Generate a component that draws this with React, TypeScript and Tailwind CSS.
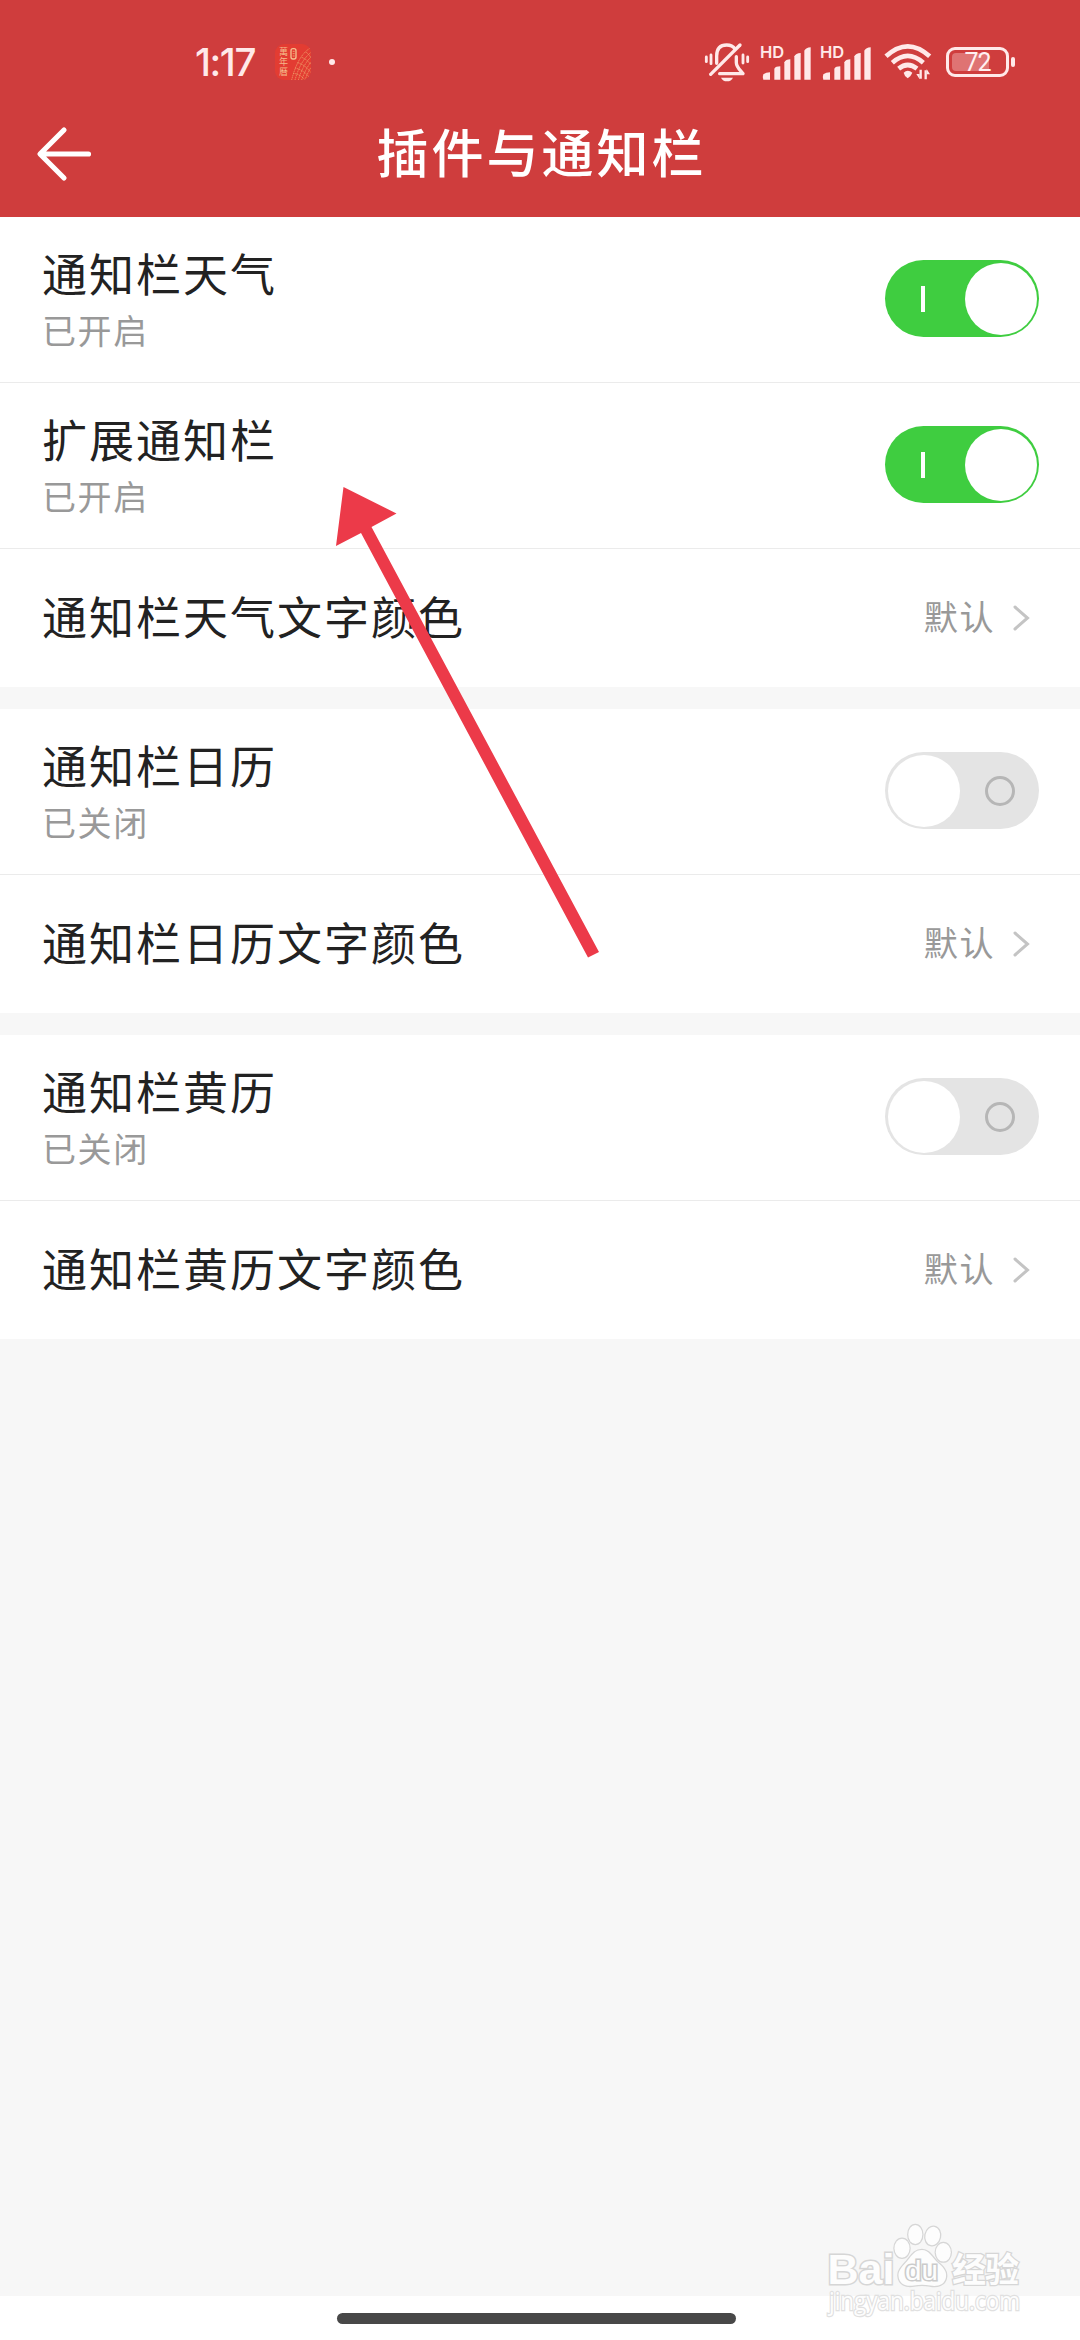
import React from "react";

const INK = "#ffe9e9";

function Signal() {
  return (
    <div className="relative h-[40px] w-[51px]">
      <span className="absolute left-[-1px] top-0 font-['Inter'] text-[16.5px] font-semibold leading-[20px] text-[#ffe9e9]">
        HD
      </span>
      <svg viewBox="0 0 153 120" className="h-[40px] w-[51px]" fill={INK}>
        <path d="M7 97q-3 8 0 16h20V91q-12 0-20 6z" />
        <path d="M40 80q4-7 18-7v40H40z" />
        <path d="M70 61q4-9 18-9v61H70z" />
        <path d="M100 43q4-9 19-10v80h-19z" />
        <path d="M130 26q5-9 19-10v97h-19z" />
      </svg>
    </div>
  );
}

function BellOff() {
  return (
    <svg viewBox="45 38 138 120" className="h-[40px] w-[46px]" fill="none" stroke={INK} strokeWidth="10" strokeLinecap="round">
      <path d="M83 102V80C83 57 95 47 113 47c12 0 20 4 25 12" />
      <path d="M65 135L153 47" />
      <path d="M142 82v18c0 12 9 20 20 33H92" strokeLinejoin="round" />
      <path d="M52 83v14M66 77v26M162 77v24M176 83v14" strokeWidth="8.500" />
      <path d="M96 145h36q-5 11-18 11t-18-11z" fill={INK} stroke="none" />
    </svg>
  );
}

function Wifi() {
  return (
    <svg viewBox="42 42 144 114" className="h-[38px] w-[48px]" fill="none" stroke={INK} strokeWidth="14">
      <path d="M48 82Q113 22 179 82" />
      <path d="M67 101Q113 60 160 101" />
      <path d="M86 119Q113 97 141 119" />
      <path d="M101 131Q113 120 127 131Q124 140 113 148Q103 141 101 131z" fill={INK} stroke="none" />
      <path d="M152 122v27M167 151v-27" strokeWidth="7" />
      <path d="M139 135h10v16zM180 136h-10v-16z" fill={INK} stroke="none" />
    </svg>
  );
}

function Battery() {
  return (
    <div className="flex items-center">
      <div className="relative h-[30px] w-[63px] rounded-[9px] border-[3px] border-[#ffe9e9] p-[3px]">
        <div className="h-full w-[37px] rounded-l-[4px] bg-[#df7373]" />
        <span className="absolute inset-0 flex items-center justify-center font-['Roboto'] text-[25px] leading-none tracking-[-1px] text-[#fff0f0]">
          72
        </span>
      </div>
      <div className="ml-[2px] h-[10px] w-[4px] rounded-[2px] bg-[#ffe9e9]" />
    </div>
  );
}

function AppBadge() {
  return (
    <div className="relative size-[36px] overflow-hidden rounded-[9px] bg-[#e33c32]">
      <div className="absolute left-[4px] top-[3px] flex flex-col font-['Noto_Sans_CJK_SC'] text-[9px] leading-[10px] text-[#f5b98a]">
        <span>萬</span>
        <span>年</span>
        <span>曆</span>
      </div>
      <svg viewBox="0 0 108 108" className="absolute inset-0 size-[36px]" fill="none" stroke="#efa06c">
        <rect x="48" y="14" width="15" height="31" rx="6" strokeWidth="4" stroke="#f5c08f" />
        <path d="M53 22h6M53 29h6M53 36h6" strokeWidth="3" />
        <path
          d="M50 108Q68 35 106 12M60 108Q76 50 108 25M70 108Q84 62 108 39M80 108Q92 74 108 54M90 108Q98 86 108 70M54 88Q76 90 90 108M60 72Q88 78 106 104M68 56Q90 62 108 86M80 40Q96 46 108 62M92 24Q102 30 108 42"
          strokeWidth="2.5"
          strokeDasharray="4 2"
        />
      </svg>
    </div>
  );
}

function Toggle({ on }: { on: boolean }) {
  return on ? (
    <div className="flex h-[77px] w-[154px] items-center justify-between rounded-full bg-[#3fcd40] pl-[36px] pr-[2.5px]">
      <div className="h-[26px] w-[4px] bg-white" />
      <div className="size-[72px] rounded-full bg-white" />
    </div>
  ) : (
    <div className="flex h-[77px] w-[154px] items-center justify-between rounded-full bg-[#e4e4e4] pl-[2.5px] pr-[24px]">
      <div className="size-[72px] rounded-full bg-white" />
      <div className="size-[30px] rounded-full border-[3px] border-[#b6b6b6]" />
    </div>
  );
}

function SwitchRow({ title, on }: { title: string; on: boolean }) {
  return (
    <div className="flex h-[166px] items-start justify-between border-b border-[#ebebeb] pl-[42px] pr-[41px]">
      <div className="pt-[26px]">
        <div className="text-[45px] leading-[60px] tracking-[2px] text-[#222]">{title}</div>
        <div className="pt-[2px] text-[34px] leading-[50px] tracking-[1.6px] text-[#999]">{on ? "已开启" : "已关闭"}</div>
      </div>
      <div className="pt-[43px]">
        <Toggle on={on} />
      </div>
    </div>
  );
}

function LinkRow({ title }: { title: string }) {
  return (
    <div className="flex h-[138px] items-center justify-between pl-[42px] pr-[50px]">
      <div className="pb-[4px] text-[45px] leading-[60px] tracking-[2px] text-[#222]">{title}</div>
      <div className="flex items-center">
        <span className="pb-[4px] text-[34px] leading-[50px] tracking-[1.6px] text-[#999]">默认</span>
        <svg viewBox="0 0 18 26" className="ml-[17px] h-[26px] w-[18px]" fill="none" stroke="#c4c4c4" strokeWidth="3">
          <path d="M3 2L15.5 13L3 24" strokeLinecap="round" />
        </svg>
      </div>
    </div>
  );
}

function PointerArrow() {
  return (
    <svg viewBox="0 0 264 472" className="pointer-events-none absolute left-[336px] top-[486px] h-[472px] w-[264px]" fill="#ec3a49">
      <path d="M7.5 1L60.5 27.5L35.5 41L263 466L252 471.5L25 47L0 60z" />
    </svg>
  );
}

function Watermark() {
  return (
    <svg
      viewBox="820 2215 210 125"
      className="pointer-events-none absolute left-[820px] top-[2215px] h-[125px] w-[210px]"
      fill="#fdfdfd"
      stroke="#d6d6d6"
      strokeWidth="2.500"
      style={{ paintOrder: "stroke" }}
    >
      <ellipse cx="902" cy="2248.3" rx="7.5" ry="9.5" />
      <ellipse cx="915.3" cy="2234.5" rx="7" ry="9.5" />
      <ellipse cx="932.7" cy="2236" rx="7.3" ry="9.3" transform="rotate(12 932.7 2236)" />
      <ellipse cx="943.3" cy="2252.3" rx="7.5" ry="9.3" />
      <path d="M922 2250C929 2250 932 2257 937 2262C943 2267 947 2271 946 2277C945 2285 937 2287 930 2285.500Q922 2284 914 2285.500C906 2287 899 2284 898.500 2276C898 2270 903 2266 908 2260C912 2255 915 2250 922 2250z" />
      <text x="827.500" y="2284" fontSize="43" fontFamily="Liberation Sans" fontWeight="bold" strokeWidth="3" textLength="67" lengthAdjust="spacingAndGlyphs">Bai</text>
      <text x="905" y="2280" fontSize="27" fontFamily="Liberation Sans" strokeWidth="3" stroke="#cbcbcb" textLength="33" lengthAdjust="spacingAndGlyphs">du</text>
      <text x="952" y="2282" fontSize="34" fontFamily="Noto Sans CJK SC" fontWeight="bold" textLength="67">经验</text>
      <text x="829" y="2310" fontSize="25" fontFamily="Open Sans" stroke="#e0e0e0" textLength="191" lengthAdjust="spacingAndGlyphs">jingyan.baidu.com</text>
    </svg>
  );
}

export default function App() {
  return (
    <div className="relative flex h-[2340px] w-[1080px] flex-col overflow-hidden bg-[#f7f7f7] font-['Noto_Sans_CJK_SC',sans-serif]">
      <header className="flex h-[217px] flex-col bg-[#cf3d3d]">
        <div className="flex h-[104px] items-center pt-[20px]">
          <span className="ml-[195px] w-[80px] font-['Inter'] text-[38.5px] font-medium leading-none tracking-[-1.4px] text-[#ffe9e9]">1:17</span>
          <AppBadge />
          <div className="ml-[18px] size-[6px] rounded-full bg-[#ffe9e9]" />
          <div className="ml-auto flex items-center pr-[65px]">
            <BellOff />
            <div className="ml-[11px]"><Signal /></div>
            <div className="ml-[9px]"><Signal /></div>
            <div className="ml-[12px]"><Wifi /></div>
            <div className="ml-[14px]"><Battery /></div>
          </div>
        </div>
        <div className="grid h-[113px] grid-cols-[1fr_auto_1fr] items-center pb-[14px]">
          <svg viewBox="0 0 56 56" className="ml-[36px] size-[56px]" fill="none" stroke="#fff" strokeWidth="5.200" strokeLinecap="round" strokeLinejoin="round">
            <path d="M28 4L4 28L28 52M5 28H52.500" />
          </svg>
          <h1 className="pb-[5px] pl-[3px] text-[52px] font-medium leading-[70px] tracking-[3px] text-white">插件与通知栏</h1>
        </div>
      </header>
      <main className="flex flex-1 flex-col gap-[22px]">
        <section className="bg-white">
          <SwitchRow title="通知栏天气" on />
          <SwitchRow title="扩展通知栏" on />
          <LinkRow title="通知栏天气文字颜色" />
        </section>
        <section className="bg-white">
          <SwitchRow title="通知栏日历" on={false} />
          <LinkRow title="通知栏日历文字颜色" />
        </section>
        <section className="bg-white">
          <SwitchRow title="通知栏黄历" on={false} />
          <LinkRow title="通知栏黄历文字颜色" />
        </section>
      </main>
      <footer className="flex h-[44px] bg-white pl-[337px] pt-[17px]">
        <div className="h-[11px] w-[399px] rounded-full bg-[#484848]" />
      </footer>
      <PointerArrow />
      <Watermark />
    </div>
  );
}
